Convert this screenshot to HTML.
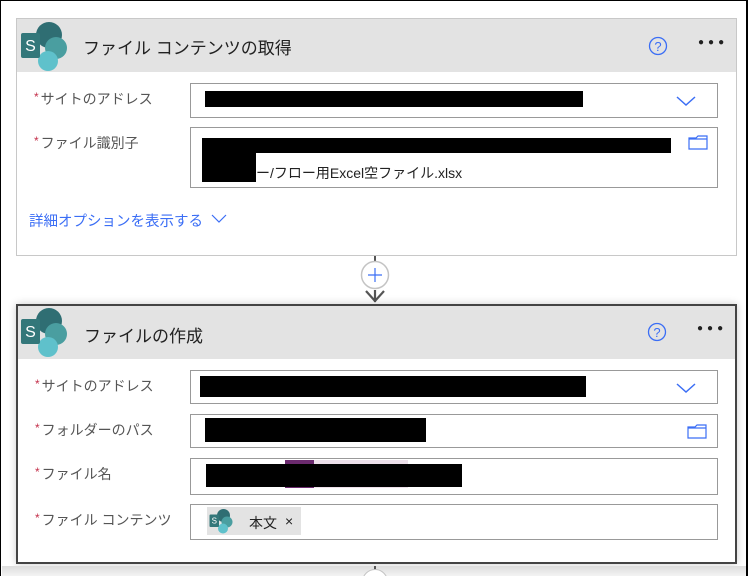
<!DOCTYPE html>
<html><head><meta charset="utf-8"><style>
*{margin:0;padding:0;box-sizing:border-box}
html,body{width:748px;height:576px;overflow:hidden}
body{position:relative;background:#fff;font-family:"Liberation Sans","Noto Sans CJK JP",sans-serif;color:#333}
.frame{position:absolute;left:0;top:0;width:748px;height:576px;border:1px solid #000;border-right-width:2px;border-bottom:none;z-index:5;pointer-events:none}
.a{position:absolute}
.card{position:absolute;left:16px;width:721px;background:#fff}
.hdr{position:absolute;left:0;right:0;background:#e3e3e3}
.title{position:absolute;left:66px;font-size:17px;color:#222}
.lbl{position:absolute;left:17px;font-size:14px;color:#555}
.lbl b{color:#c4314b;font-weight:normal;font-size:12px;margin-right:2px;position:relative;top:-3px}
.inp{position:absolute;width:528px;border:1px solid #999;background:#fff}
.blk{position:absolute;background:#000}
.dots{position:absolute;font-size:10px;letter-spacing:4px;color:#222}
</style></head><body>
<div class="frame"></div>
<!-- card1 -->
<div class="card" style="top:18px;height:238px;border:1px solid #c8c8c8">
 <div class="hdr" style="top:0;height:53px"></div>
 <svg class="a" style="left:0;top:0" width="60" height="55"><circle cx="32" cy="16" r="13" fill="#2f6e73"/><circle cx="39" cy="29" r="11" fill="#4a9ea0"/><circle cx="31" cy="42" r="10" fill="#5fc1cb"/><rect x="4" y="14" width="19" height="25" rx="2" fill="#33777a"/><text x="13.5" y="32" font-size="16" fill="#fff" text-anchor="middle" font-family="Liberation Sans">S</text></svg>
 <div class="title" style="top:15px">ファイル コンテンツの取得</div>
 <svg class="a" style="left:631px;top:17px" width="20" height="20"><circle cx="10" cy="10" r="8.5" fill="none" stroke="#3b6ef5" stroke-width="1.3"/><text x="10" y="15" font-size="13" fill="#3b6ef5" text-anchor="middle">?</text></svg>
 <div class="dots" style="left:681px;top:18px">●●●</div>
 <div class="lbl" style="top:70px"><b>*</b>サイトのアドレス</div>
 <div class="inp" style="left:173px;top:64px;height:35px"></div>
 <div class="blk" style="left:188px;top:72px;width:378px;height:16px"></div>
 <svg class="a" style="left:659px;top:76px" width="20" height="12"><path d="M1 2l9 8 9-8" fill="none" stroke="#3b6ef5" stroke-width="1.5"/></svg>
 <div class="lbl" style="top:114px"><b>*</b>ファイル識別子</div>
 <div class="inp" style="left:173px;top:108px;height:61px"></div>
 <div class="blk" style="left:185px;top:119px;width:469px;height:15px"></div>
 <div class="blk" style="left:185px;top:134px;width:54px;height:29px"></div>
 <div class="a" style="left:239px;top:144px;font-size:14px;color:#222">ー/フロー用Excel空ファイル.xlsx</div>
 <svg class="a" style="left:671px;top:115px" width="20" height="16"><path d="M1 4h7l2-2h9v13H1z M1 5h18" fill="none" stroke="#3b6ef5" stroke-width="1.2"/></svg>
 <div class="a" style="left:12px;top:191px;font-size:14.5px;color:#3b6ef5">詳細オプションを表示する</div>
 <svg class="a" style="left:194px;top:195px" width="16" height="10"><path d="M1 1l7 7 7-7" fill="none" stroke="#3b6ef5" stroke-width="1.2"/></svg>
</div>
<!-- connector -->
<div class="a" style="left:374px;top:256px;width:2px;height:8px;background:#555"></div>
<svg class="a" style="left:360px;top:260px" width="30" height="44"><circle cx="15" cy="15" r="13.5" fill="#fff" stroke="#c4c4c4" stroke-width="1.5"/><path d="M15 8v14M8 15h14" stroke="#3b6ef5" stroke-width="1.2"/><path d="M15 30v12M6 31l9 10 9-10" fill="none" stroke="#555" stroke-width="2.2"/></svg>
<!-- card2 -->
<div class="card" style="top:304px;height:260px;border:2px solid #444;box-shadow:0 0 8px rgba(0,0,0,.2)">
 <div class="hdr" style="top:0;height:53px"></div>
 <svg class="a" style="left:0;top:0" width="60" height="55"><circle cx="31" cy="15" r="13" fill="#2f6e73"/><circle cx="38" cy="28" r="11" fill="#4a9ea0"/><circle cx="30" cy="41" r="10" fill="#5fc1cb"/><rect x="3" y="13" width="19" height="25" rx="2" fill="#33777a"/><text x="12.5" y="31" font-size="16" fill="#fff" text-anchor="middle" font-family="Liberation Sans">S</text></svg>
 <div class="title" style="top:16px">ファイルの作成</div>
 <svg class="a" style="left:629px;top:16px" width="20" height="20"><circle cx="10" cy="10" r="8.5" fill="none" stroke="#3b6ef5" stroke-width="1.3"/><text x="10" y="15" font-size="13" fill="#3b6ef5" text-anchor="middle">?</text></svg>
 <div class="dots" style="left:679px;top:17px">●●●</div>
 <div class="lbl" style="top:70px"><b>*</b>サイトのアドレス</div>
 <div class="inp" style="left:172px;top:64px;height:34px"></div>
 <div class="blk" style="left:182px;top:70px;width:386px;height:21px"></div>
 <svg class="a" style="left:658px;top:76px" width="20" height="12"><path d="M1 2l9 8 9-8" fill="none" stroke="#3b6ef5" stroke-width="1.5"/></svg>
 <div class="lbl" style="top:114px"><b>*</b>フォルダーのパス</div>
 <div class="inp" style="left:172px;top:108px;height:34px"></div>
 <div class="blk" style="left:187px;top:112px;width:221px;height:24px"></div>
 <svg class="a" style="left:669px;top:117px" width="20" height="16"><path d="M1 4h7l2-2h9v13H1z M1 5h18" fill="none" stroke="#3b6ef5" stroke-width="1.2"/></svg>
 <div class="lbl" style="top:158px"><b>*</b>ファイル名</div>
 <div class="inp" style="left:172px;top:152px;height:37px"></div>
 <div class="a" style="left:267px;top:154px;width:29px;height:28px;background:#6b2a6e"></div>
 <div class="a" style="left:296px;top:154px;width:94px;height:28px;background:#ede0ea"></div>
 <div class="blk" style="left:188px;top:158px;width:256px;height:23px"></div>
 <div class="lbl" style="top:204px"><b>*</b>ファイル コンテンツ</div>
 <div class="inp" style="left:172px;top:198px;height:36px"></div>
 <div class="a" style="left:189px;top:201px;width:94px;height:28px;background:#e3e3e3"></div>
 <svg class="a" style="left:190px;top:202px" width="26" height="26" viewBox="0 0 52 52"><circle cx="31" cy="15" r="13" fill="#2f6e73"/><circle cx="38" cy="28" r="11" fill="#4a9ea0"/><circle cx="30" cy="41" r="10" fill="#5fc1cb"/><rect x="3" y="13" width="19" height="25" rx="2" fill="#33777a"/><text x="12.5" y="31" font-size="16" fill="#fff" text-anchor="middle">S</text></svg>
 <div class="a" style="left:231px;top:207px;font-size:14px;color:#222">本文</div>
 <div class="a" style="left:267px;top:207px;font-size:14px;color:#222">×</div>
</div>
<div class="a" style="left:2px;top:566px;width:744px;height:10px;background:linear-gradient(#ddd,#f3f3f3)"></div>
<div class="a" style="left:374px;top:566px;width:2px;height:4px;background:#555"></div>
<div class="a" style="left:362px;top:569px;width:26px;height:26px;border-radius:50%;border:1.5px solid #c4c4c4;background:#fff"></div>
</body></html>
